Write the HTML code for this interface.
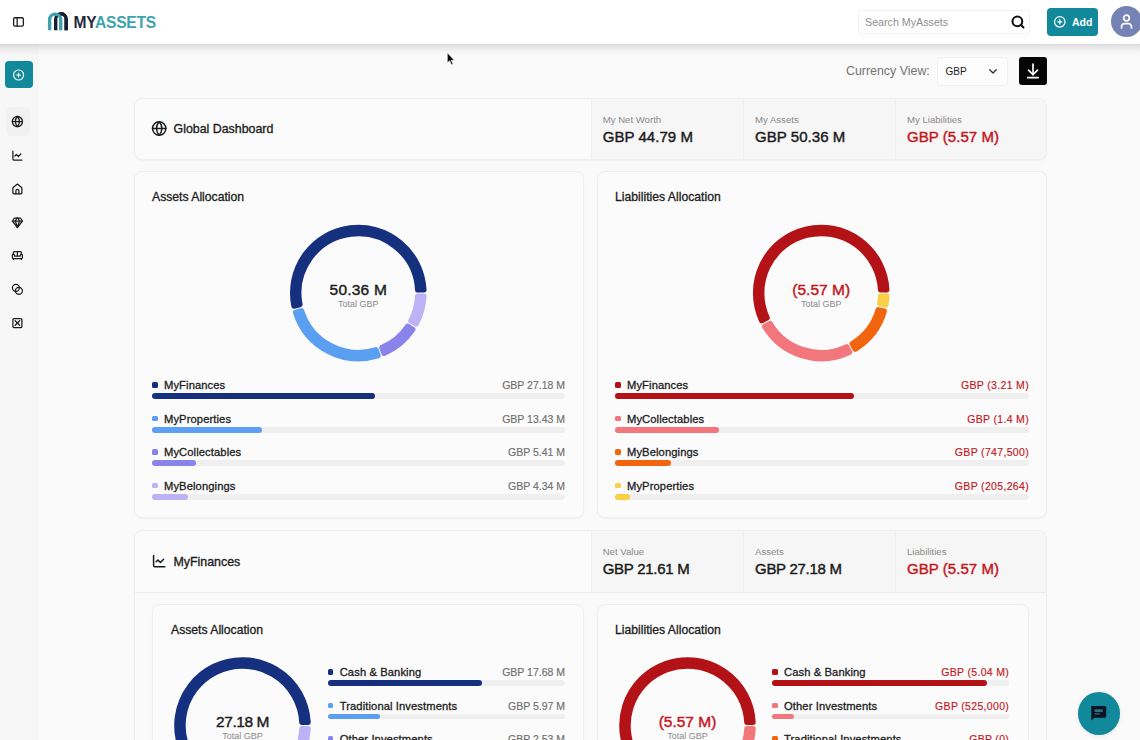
<!DOCTYPE html>
<html lang="en">
<head>
<meta charset="utf-8">
<title>MyAssets - Global Dashboard</title>
<style>
*{box-sizing:border-box;margin:0;padding:0}
html,body{width:1140px;height:740px;overflow:hidden}
body{position:relative;background:#fafafa;font-family:"Liberation Sans",Arial,sans-serif;color:#1c1c1c}
.abs{position:absolute}
#hdr{position:absolute;left:0;top:0;width:1140px;height:44px;background:#fff;z-index:5}
#hsh{position:absolute;left:0;top:44px;width:1140px;height:11px;background:linear-gradient(to bottom,rgba(0,0,10,.12),rgba(0,0,10,.05) 45%,rgba(0,0,0,0));z-index:5}
#side{position:absolute;left:0;top:44px;width:38px;height:696px;background:#f7f7f7;border-right:1px solid #f3f3f3}
.card{position:absolute;background:#fbfbfb;border:1px solid #efefef;border-radius:8px;box-shadow:0 1px 2px rgba(0,0,0,.04)}
.ttl{position:absolute;-webkit-text-stroke:.33px #1c1c1c;font-size:12.4px;white-space:nowrap;color:#1c1c1c;line-height:16px}
.ct{position:absolute;-webkit-text-stroke:.3px #1c1c1c;font-size:12.2px;white-space:nowrap;color:#1c1c1c;line-height:16px}
.sl{position:absolute;font-size:9.6px;color:#8a8a8a;white-space:nowrap;line-height:12px}
.sv{position:absolute;font-size:15px;font-weight:400;-webkit-text-stroke:.42px;letter-spacing:.05px;color:#1a1a1a;white-space:nowrap;line-height:18px}
.red{color:#c4161c !important}
.lv.red{letter-spacing:.33px}
.dv.red{letter-spacing:0}
.cell{position:absolute;background:#f6f6f6;border-left:1px solid #efefef}
.mk{position:absolute;width:5.5px;height:5.5px;border-radius:1.5px}
.ll{position:absolute;-webkit-text-stroke:.3px #1c1c1c;letter-spacing:.1px;font-size:11.2px;line-height:16px;white-space:nowrap;color:#1c1c1c}
.lv{position:absolute;-webkit-text-stroke:.15px;width:150px;text-align:right;font-size:10.5px;line-height:16px;white-space:nowrap;color:#6f6f6f}
.tr{position:absolute;height:5.8px;border-radius:3px;background:#efefef}
.tr i{display:block;height:5.8px;border-radius:3px}
.dv{position:absolute;-webkit-text-stroke:.42px;width:140px;text-align:center;font-size:15.5px;line-height:18px;color:#1c1c1c;white-space:nowrap;letter-spacing:.2px}
.ds{position:absolute;width:140px;text-align:center;font-size:9px;line-height:12px;color:#8a8a8a;white-space:nowrap}
svg{position:absolute;overflow:visible}
.ic{fill:none;stroke:#1c1c1c;stroke-width:1.6;stroke-linecap:round;stroke-linejoin:round}
</style>
</head>
<body>

<!-- SIDEBAR -->
<div id="side"></div>
<div class="abs" style="left:5px;top:61.2px;width:27.7px;height:27.3px;border-radius:4px;background:#11899a"></div>
<div class="abs" style="left:5.5px;top:107px;width:24px;height:29px;border-radius:5px;background:#f1f1f1"></div>

<!-- HEADER -->
<div id="hdr">
  <div class="abs" id="logo" style="left:73.5px;top:13.6px;font-size:15.6px;font-weight:700;line-height:18px;letter-spacing:-.25px;white-space:nowrap;color:#1f2a3c">MY<span style="color:#3fa3ad">ASSETS</span></div>
  <div class="abs" style="left:858px;top:9.5px;width:172px;height:24.5px;border:1px solid #f0f0f0;border-radius:3px;background:#fff"></div>
  <div class="abs" style="left:865px;top:14px;font-size:10.7px;line-height:16px;color:#8f8f8f;white-space:nowrap">Search MyAssets</div>
  <div class="abs" style="left:1047.2px;top:8px;width:51px;height:27.5px;border-radius:4px;background:#11899a"></div>
  <div class="abs" style="left:1072px;top:14px;font-size:10.5px;font-weight:700;line-height:16px;color:#fff;white-space:nowrap">Add</div>
  <div class="abs" style="left:1111px;top:5.5px;width:31px;height:31px;border-radius:50%;background:#7582b4"></div>
</div>

<div id="hsh"></div>

<!-- toolbar -->
<div class="abs" style="left:846px;top:63px;font-size:12.4px;line-height:16px;color:#747474;white-space:nowrap">Currency View:</div>
<div class="abs" style="left:937px;top:56.5px;width:70.5px;height:29px;border:1px solid #f0f0f0;border-radius:4px;background:#fcfcfc"></div>
<div class="abs" style="left:945.5px;top:63.7px;font-size:10px;line-height:16px;color:#1c1c1c;white-space:nowrap">GBP</div>
<div class="abs" style="left:1019px;top:57px;width:28px;height:27.6px;border-radius:3px;background:#060606"></div>

<!-- CARD: Global dashboard header -->
<div class="card" style="left:133.5px;top:97.5px;width:913px;height:62px;overflow:hidden">
  <div class="cell" style="left:456px;top:0;width:152px;height:62px"></div>
  <div class="cell" style="left:608px;top:0;width:152px;height:62px"></div>
  <div class="cell" style="left:760px;top:0;width:153px;height:62px"></div>
</div>
<div class="ttl" style="left:173.5px;top:120.5px">Global Dashboard</div>
<div class="sl" style="left:602.7px;top:113.5px">My Net Worth</div>
<div class="sv" style="left:602.7px;top:127.5px">GBP 44.79 M</div>
<div class="sl" style="left:755px;top:113.5px">My Assets</div>
<div class="sv" style="left:755px;top:127.5px">GBP 50.36 M</div>
<div class="sl" style="left:907px;top:113.5px">My Liabilities</div>
<div class="sv red" style="left:907px;top:127.5px">GBP (5.57 M)</div>

<!-- CARD: Assets Allocation -->
<div class="card" style="left:133.5px;top:171px;width:450px;height:347px"></div>
<div class="ct" style="left:152px;top:188.5px">Assets Allocation</div>
<div class="dv" style="left:288.3px;top:280.6px">50.36 M</div>
<div class="ds" style="left:288.3px;top:298px">Total GBP</div>
<div class="mk" style="left:152px;top:382.3px;background:#15307f"></div>
<div class="ll" style="left:164px;top:377.3px">MyFinances</div>
<div class="lv" style="left:415px;top:377.3px">GBP 27.18 M</div>
<div class="tr" style="left:152px;top:393.3px;width:413px"><i style="width:222.9px;background:#15307f"></i></div>
<div class="mk" style="left:152px;top:415.8px;background:#5a9ff2"></div>
<div class="ll" style="left:164px;top:410.8px">MyProperties</div>
<div class="lv" style="left:415px;top:410.8px">GBP 13.43 M</div>
<div class="tr" style="left:152px;top:426.8px;width:413px"><i style="width:110.1px;background:#5a9ff2"></i></div>
<div class="mk" style="left:152px;top:449.3px;background:#8a84ea"></div>
<div class="ll" style="left:164px;top:444.3px">MyCollectables</div>
<div class="lv" style="left:415px;top:444.3px">GBP 5.41 M</div>
<div class="tr" style="left:152px;top:460.3px;width:413px"><i style="width:44.4px;background:#8a84ea"></i></div>
<div class="mk" style="left:152px;top:482.8px;background:#bdb2f6"></div>
<div class="ll" style="left:164px;top:477.8px">MyBelongings</div>
<div class="lv" style="left:415px;top:477.8px">GBP 4.34 M</div>
<div class="tr" style="left:152px;top:493.8px;width:413px"><i style="width:35.6px;background:#bdb2f6"></i></div>

<!-- CARD: Liabilities Allocation -->
<div class="card" style="left:597px;top:171px;width:449.5px;height:347px"></div>
<div class="ct" style="left:615px;top:188.5px">Liabilities Allocation</div>
<div class="dv red" style="left:751.2px;top:280.6px">(5.57 M)</div>
<div class="ds" style="left:751.2px;top:298px">Total GBP</div>
<div class="mk" style="left:615px;top:382.3px;background:#b31217"></div>
<div class="ll" style="left:627px;top:377.3px">MyFinances</div>
<div class="lv red" style="left:879px;top:377.3px">GBP (3.21 M)</div>
<div class="tr" style="left:615px;top:393.3px;width:414px"><i style="width:238.9px;background:#b31217"></i></div>
<div class="mk" style="left:615px;top:415.8px;background:#f2777c"></div>
<div class="ll" style="left:627px;top:410.8px">MyCollectables</div>
<div class="lv red" style="left:879px;top:410.8px">GBP (1.4 M)</div>
<div class="tr" style="left:615px;top:426.8px;width:414px"><i style="width:104.2px;background:#f2777c"></i></div>
<div class="mk" style="left:615px;top:449.3px;background:#f2650f"></div>
<div class="ll" style="left:627px;top:444.3px">MyBelongings</div>
<div class="lv red" style="left:879px;top:444.3px">GBP (747,500)</div>
<div class="tr" style="left:615px;top:460.3px;width:414px"><i style="width:55.6px;background:#f2650f"></i></div>
<div class="mk" style="left:615px;top:482.8px;background:#f9cf45"></div>
<div class="ll" style="left:627px;top:477.8px">MyProperties</div>
<div class="lv red" style="left:879px;top:477.8px">GBP (205,264)</div>
<div class="tr" style="left:615px;top:493.8px;width:414px"><i style="width:15.3px;background:#f9cf45"></i></div>

<!-- CARD: MyFinances -->
<div class="card" style="left:133.5px;top:530px;width:913px;height:260px;overflow:hidden;background:#fafafa">
  <div class="abs" style="left:0;top:0;width:456px;height:61.5px;background:#fbfbfb"></div>
  <div class="cell" style="left:456px;top:0;width:152px;height:61.5px"></div>
  <div class="cell" style="left:608px;top:0;width:152px;height:61.5px"></div>
  <div class="cell" style="left:760px;top:0;width:153px;height:61.5px"></div>
  <div class="abs" style="left:0;top:61px;width:914px;height:1px;background:#eeeeee"></div>
</div>
<div class="ttl" style="left:173.5px;top:553.5px">MyFinances</div>
<div class="sl" style="left:602.7px;top:545.5px">Net Value</div>
<div class="sv" style="left:602.7px;top:559.5px;letter-spacing:-.28px">GBP 21.61 M</div>
<div class="sl" style="left:755px;top:545.5px">Assets</div>
<div class="sv" style="left:755px;top:559.5px;letter-spacing:-.28px">GBP 27.18 M</div>
<div class="sl" style="left:907px;top:545.5px">Liabilities</div>
<div class="sv red" style="left:907px;top:559.5px">GBP (5.57 M)</div>

<div class="card" style="left:152px;top:604px;width:431.5px;height:200px"></div>
<div class="ct" style="left:171px;top:621.5px">Assets Allocation</div>
<div class="dv" style="left:172.5px;top:713px;letter-spacing:-.45px">27.18 M</div>
<div class="ds" style="left:172.5px;top:729.7px">Total GBP</div>
<div class="mk" style="left:327.7px;top:669.2px;background:#15307f"></div>
<div class="ll" style="left:339.7px;top:664.2px">Cash &amp; Banking</div>
<div class="lv" style="left:415px;top:664.2px">GBP 17.68 M</div>
<div class="tr" style="left:327.7px;top:680.2px;width:237.3px"><i style="width:154.4px;background:#15307f"></i></div>
<div class="mk" style="left:327.7px;top:702.7px;background:#5a9ff2"></div>
<div class="ll" style="left:339.7px;top:697.7px">Traditional Investments</div>
<div class="lv" style="left:415px;top:697.7px">GBP 5.97 M</div>
<div class="tr" style="left:327.7px;top:713.7px;width:237.3px"><i style="width:52.1px;background:#5a9ff2"></i></div>
<div class="mk" style="left:327.7px;top:736.2px;background:#8a84ea"></div>
<div class="ll" style="left:339.7px;top:731.2px">Other Investments</div>
<div class="lv" style="left:415px;top:731.2px">GBP 2.53 M</div>
<div class="tr" style="left:327.7px;top:747.2px;width:237.3px"><i style="width:22.1px;background:#8a84ea"></i></div>

<div class="card" style="left:597px;top:604px;width:432px;height:200px"></div>
<div class="ct" style="left:615px;top:621.5px">Liabilities Allocation</div>
<div class="dv red" style="left:617.5px;top:713px">(5.57 M)</div>
<div class="ds" style="left:617.5px;top:729.7px">Total GBP</div>
<div class="mk" style="left:772px;top:669.2px;background:#b31217"></div>
<div class="ll" style="left:784px;top:664.2px">Cash &amp; Banking</div>
<div class="lv red" style="left:859.2px;top:664.2px">GBP (5.04 M)</div>
<div class="tr" style="left:772px;top:680.2px;width:237.20000000000005px"><i style="width:214.8px;background:#b31217"></i></div>
<div class="mk" style="left:772px;top:702.7px;background:#f2777c"></div>
<div class="ll" style="left:784px;top:697.7px">Other Investments</div>
<div class="lv red" style="left:859.2px;top:697.7px">GBP (525,000)</div>
<div class="tr" style="left:772px;top:713.7px;width:237.20000000000005px"><i style="width:22.4px;background:#f2777c"></i></div>
<div class="mk" style="left:772px;top:736.2px;background:#f2650f"></div>
<div class="ll" style="left:784px;top:731.2px">Traditional Investments</div>
<div class="lv red" style="left:859.2px;top:731.2px">GBP (0)</div>
<div class="tr" style="left:772px;top:747.2px;width:237.20000000000005px"><i style="width:0.0px;background:#f2650f"></i></div>

<!-- DONUTS + ICONS -->
<svg width="1140" height="740" viewBox="0 0 1140 740" style="left:0;top:0;z-index:6;pointer-events:none">
<path d="M423.72 289.68A65.50 65.50 0 1 0 294.09 305.93L299.82 304.52A59.60 59.60 0 1 1 417.81 289.72Z" fill="#15307f" stroke="#15307f" stroke-width="5.6" stroke-linejoin="round"/>
<path d="M295.73 312.37A65.50 65.50 0 0 0 377.88 355.50L375.88 349.95A59.60 59.60 0 0 1 301.44 310.87Z" fill="#5a9ff2" stroke="#5a9ff2" stroke-width="5.6" stroke-linejoin="round"/>
<path d="M384.11 353.20A65.50 65.50 0 0 0 412.64 329.56L407.61 326.48A59.60 59.60 0 0 1 382.02 347.68Z" fill="#8a84ea" stroke="#8a84ea" stroke-width="5.6" stroke-linejoin="round"/>
<path d="M416.07 323.87A65.50 65.50 0 0 0 423.72 296.32L417.81 296.28A59.60 59.60 0 0 1 410.99 320.86Z" fill="#bdb2f6" stroke="#bdb2f6" stroke-width="5.6" stroke-linejoin="round"/>
<path d="M886.62 289.68A65.50 65.50 0 1 0 761.76 320.51L767.00 317.80A59.60 59.60 0 1 1 880.71 289.72Z" fill="#b31217" stroke="#b31217" stroke-width="5.6" stroke-linejoin="round"/>
<path d="M764.85 326.39A65.50 65.50 0 0 0 849.33 352.15L846.57 346.93A59.60 59.60 0 0 1 770.05 323.60Z" fill="#f2777c" stroke="#f2777c" stroke-width="5.6" stroke-linejoin="round"/>
<path d="M855.18 349.00A65.50 65.50 0 0 0 884.10 311.27L878.36 309.86A59.60 59.60 0 0 1 852.33 343.82Z" fill="#f2650f" stroke="#f2650f" stroke-width="5.6" stroke-linejoin="round"/>
<path d="M885.63 304.80A65.50 65.50 0 0 0 886.62 296.32L880.71 296.28A59.60 59.60 0 0 1 879.87 303.49Z" fill="#f9cf45" stroke="#f9cf45" stroke-width="5.6" stroke-linejoin="round"/>
<path d="M307.92 722.18A65.50 65.50 0 1 0 199.64 775.03L203.31 770.40A59.60 59.60 0 1 1 302.01 722.22Z" fill="#15307f" stroke="#15307f" stroke-width="5.6" stroke-linejoin="round"/>
<path d="M204.88 779.12A65.50 65.50 0 0 0 282.36 777.48L278.57 772.95A59.60 59.60 0 0 1 208.48 774.43Z" fill="#5a9ff2" stroke="#5a9ff2" stroke-width="5.6" stroke-linejoin="round"/>
<path d="M287.42 773.17A65.50 65.50 0 0 0 304.31 747.16L298.66 745.45A59.60 59.60 0 0 1 283.56 768.70Z" fill="#8a84ea" stroke="#8a84ea" stroke-width="5.6" stroke-linejoin="round"/>
<path d="M306.19 740.79A65.50 65.50 0 0 0 307.92 728.82L302.01 728.78A59.60 59.60 0 0 1 300.51 739.17Z" fill="#bdb2f6" stroke="#bdb2f6" stroke-width="5.6" stroke-linejoin="round"/>
<path d="M752.92 722.18A65.50 65.50 0 1 0 739.90 764.81L735.02 761.47A59.60 59.60 0 1 1 747.01 722.22Z" fill="#b31217" stroke="#b31217" stroke-width="5.6" stroke-linejoin="round"/>
<path d="M743.61 759.29A65.50 65.50 0 0 0 752.92 728.83L747.01 728.78A59.60 59.60 0 0 1 738.68 756.03Z" fill="#f2777c" stroke="#f2777c" stroke-width="5.6" stroke-linejoin="round"/>
<g transform="translate(12.00 15.30) scale(0.5417)" fill="none" stroke="#1c1c1c" stroke-width="2.40" stroke-linecap="round" stroke-linejoin="round" ><rect x="3" y="4.500" width="18" height="15.500" rx="2.500"/><path d="M9.500 4.500v15.500"/></g>
<g transform="translate(12.60 69.00) scale(0.5000)" fill="none" stroke="#fff" stroke-width="2.30" stroke-linecap="round" stroke-linejoin="round" ><circle cx="12" cy="12" r="10"/><path d="M8 12h8"/><path d="M12 8v8"/></g>
<g transform="translate(11.30 115.50) scale(0.5083)" fill="none" stroke="#1c1c1c" stroke-width="2.56" stroke-linecap="round" stroke-linejoin="round" ><circle cx="12" cy="12" r="10"/><path d="M12 2a14.5 14.5 0 0 0 0 20 14.5 14.5 0 0 0 0-20"/><path d="M2 12h20"/></g>
<g transform="translate(11.40 149.50) scale(0.5000)" fill="none" stroke="#1c1c1c" stroke-width="2.50" stroke-linecap="round" stroke-linejoin="round" ><path d="M3 3v16a2 2 0 0 0 2 2h16"/><path d="m19 9-5 5-4-4-3 3"/></g>
<g transform="translate(11.40 183.30) scale(0.5000)" fill="none" stroke="#1c1c1c" stroke-width="2.50" stroke-linecap="round" stroke-linejoin="round" ><path d="M15 21v-6a3 3 0 0 0-6 0v6"/><path d="M3 10a2 2 0 0 1 .709-1.528l7-5.999a2 2 0 0 1 2.582 0l7 5.999A2 2 0 0 1 21 10v9a2 2 0 0 1-2 2H5a2 2 0 0 1-2-2z"/></g>
<g transform="translate(11.40 216.50) scale(0.5000)" fill="none" stroke="#1c1c1c" stroke-width="2.50" stroke-linecap="round" stroke-linejoin="round" ><path d="M6 3h12l4 6-10 13L2 9Z"/><path d="M11 3 8 9l4 13 4-13-3-6"/><path d="M2 9h20"/></g>
<g transform="translate(11.40 249.50) scale(0.5000)" fill="none" stroke="#1c1c1c" stroke-width="2.50" stroke-linecap="round" stroke-linejoin="round" ><path d="M20 9V6a2 2 0 0 0-2-2H6a2 2 0 0 0-2 2v3"/><path d="M2 16a2 2 0 0 0 2 2h16a2 2 0 0 0 2-2v-5a2 2 0 0 0-4 0v1.500a.5.5 0 0 1-.5.5h-11a.5.5 0 0 1-.5-.5V11a2 2 0 0 0-4 0z"/><path d="M4 18v2"/><path d="M20 18v2"/><path d="M12 4v9"/></g>
<g transform="translate(11.40 283.30) scale(0.5000)" fill="none" stroke="#1c1c1c" stroke-width="2.50" stroke-linecap="round" stroke-linejoin="round" ><circle cx="9" cy="9" r="7"/><circle cx="15" cy="15" r="7"/></g>
<g transform="translate(11.40 317.00) scale(0.5000)" fill="none" stroke="#1c1c1c" stroke-width="2.50" stroke-linecap="round" stroke-linejoin="round" ><rect x="3" y="3" width="18" height="18" rx="2"/><path d="m16.5 7.500-9 9"/><path d="m7.500 7.500 9 9"/></g>
<g transform="translate(151.20 120.50) scale(0.6667)" fill="none" stroke="#1c1c1c" stroke-width="2.25" stroke-linecap="round" stroke-linejoin="round" ><circle cx="12" cy="12" r="10"/><path d="M12 2a14.5 14.5 0 0 0 0 20 14.5 14.5 0 0 0 0-20"/><path d="M2 12h20"/></g>
<g transform="translate(151.70 553.70) scale(0.6250)" fill="none" stroke="#1c1c1c" stroke-width="2.40" stroke-linecap="round" stroke-linejoin="round" ><path d="M3 3v16a2 2 0 0 0 2 2h16"/><path d="m19 9-5 5-4-4-3 3"/></g>
<g transform="translate(1010.70 14.70) scale(0.6083)" fill="none" stroke="#111" stroke-width="3.45" stroke-linecap="round" stroke-linejoin="round" ><circle cx="11" cy="11" r="8"/><path d="m21 21-4.300-4.300"/></g>
<g transform="translate(1053.50 15.50) scale(0.5250)" fill="none" stroke="#fff" stroke-width="2.38" stroke-linecap="round" stroke-linejoin="round" ><circle cx="12" cy="12" r="10"/><path d="M8 12h8"/><path d="M12 8v8"/></g>
<g transform="translate(1118.00 13.10) scale(0.7083)" fill="none" stroke="#fff" stroke-width="2.40" stroke-linecap="round" stroke-linejoin="round" ><path d="M19 21v-2a4 4 0 0 0-4-4H9a4 4 0 0 0-4 4v2"/><circle cx="12" cy="7" r="4"/></g>
<g transform="translate(986.50 64.80) scale(0.5417)" fill="none" stroke="#333" stroke-width="2.58" stroke-linecap="round" stroke-linejoin="round" ><path d="m6 9 6 6 6-6"/></g>
<g transform="translate(1024.00 61.80) scale(0.7500)" fill="none" stroke="#fff" stroke-width="2.27" stroke-linecap="round" stroke-linejoin="round" ><path d="M12 17V3"/><path d="m6 11 6 6 6-6"/><path d="M19 21H5"/></g>
<path d="M55.7 30.3V19.05A5.25 5.25 0 0 1 66.2 19.05V30.3" fill="none" stroke="#18202e" stroke-width="3.4"/><path d="M49.6 30.3V19.65A5.55 5.55 0 0 1 60.7 19.65V30.3" fill="none" stroke="#3fa3ad" stroke-width="3.4"/><path d="M60.95 13.8A5.25 5.25 0 0 1 66.2 19.05V30.3" fill="none" stroke="#18202e" stroke-width="3.4"/>
<path d="M447.300 52.700v10.200l2.300-2.100 1.800 4 1.600-.7-1.800-3.900h3.200z" fill="#0a0a0a" stroke="#fff" stroke-width=".6"/>
</svg>
<svg width="1140" height="740" viewBox="0 0 1140 740" style="left:0;top:0;z-index:9;pointer-events:none"><path d="M1091.300 705.900h13.400a1.500 1.500 0 0 1 1.500 1.500v8.800a1.500 1.500 0 0 1-1.500 1.500h-10.300l-3.100 2.900z" fill="#0d1320"/><path d="M1094.600 709.300h8.200v2.600h-8.200zM1094.600 713.300h5.200v1.200h-5.200z" fill="#2f6f88"/></svg>


<!-- chat button -->
<div class="abs" style="left:1077.5px;top:692.2px;width:42.5px;height:42.5px;border-radius:50%;background:#12889b;box-shadow:0 1px 4px rgba(0,0,0,.08);z-index:8"></div>

</body>
</html>
